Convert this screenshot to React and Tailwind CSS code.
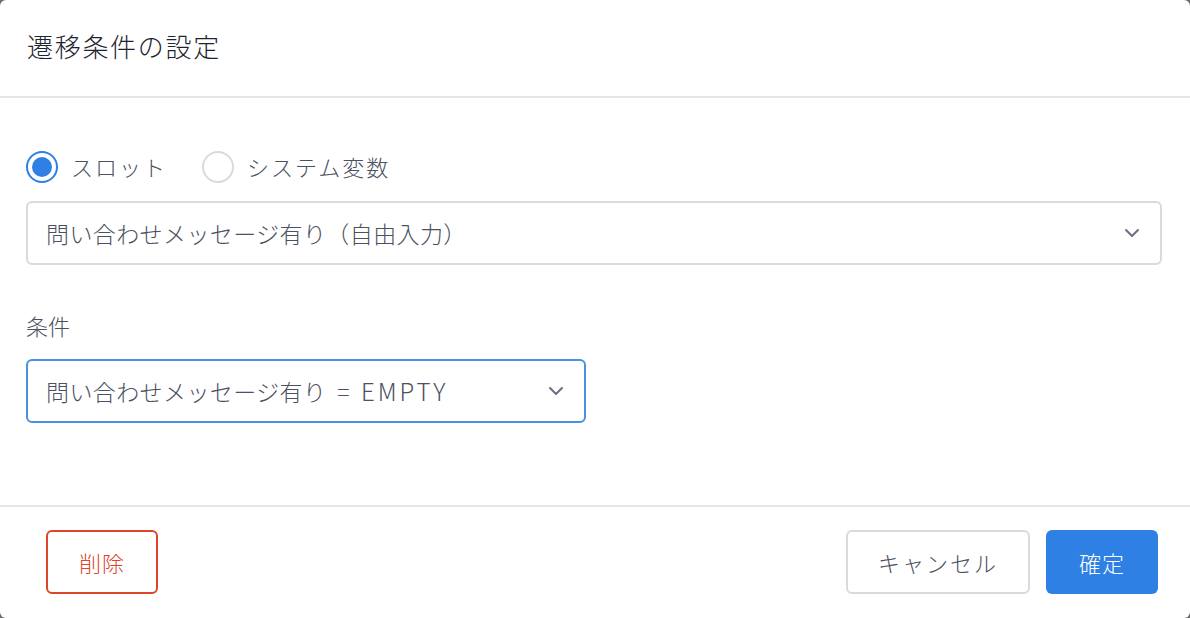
import { ChevronDown } from 'lucide-react'

const font = { fontFamily: '"Noto Sans CJK JP", "Noto Sans", sans-serif' }

function Radio({ checked, label }) {
  return (
    <label className="flex items-center gap-[13px] cursor-pointer">
      <span
        className={`flex items-center justify-center w-[32px] h-[32px] rounded-full border-2 ${
          checked ? 'border-[#2f80e4]' : 'border-[#d9d9de]'
        }`}
      >
        {checked && <span className="w-[20px] h-[20px] rounded-full bg-[#2f80e4]"></span>}
      </span>
      <span className="text-[22px] tracking-[2px] font-light text-[#4a5160]">{label}</span>
    </label>
  )
}

function Select({ children, active, className }) {
  return (
    <div
      className={`flex items-center justify-between h-[64px] pl-[18px] pr-[16px] rounded-[6px] border-2 bg-white ${
        active ? 'border-[#4a90e2]' : 'border-[#dadade]'
      } ${className}`}
    >
      <span className="text-[23px] tracking-[0.4px] font-light text-[#4a5160] whitespace-pre">{children}</span>
      <ChevronDown className="w-[24px] h-[24px] text-[#6b7080]" strokeWidth={2} />
    </div>
  )
}

export default function App() {
  return (
    <div className="h-screen bg-[#6b6b6b]" style={font}>
      <div className="h-full bg-white rounded-[6px] flex flex-col overflow-hidden">
        {/* Header */}
        <header className="h-[98px] shrink-0 flex items-center px-[27px] border-b-2 border-[#e6e6e6]">
          <h1 className="text-[26px] tracking-[1.7px] font-light text-[#1f2530] -mt-[6px]">遷移条件の設定</h1>
        </header>

        {/* Body */}
        <main className="flex-1 px-[26px] pt-[52px]">
          <div className="flex items-center gap-[35px]">
            <Radio checked label="スロット" />
            <Radio label="システム変数" />
          </div>
          <Select className="mt-[18px] w-[1136px]">問い合わせメッセージ有り（自由入力）</Select>

          <div className="mt-[45px] text-[22px] font-light text-[#4a5160] leading-[30px]">条件</div>
          <Select className="mt-[19px] w-[560px]" active>
            問い合わせメッセージ有り  =  <span className="text-[24px] tracking-[3px]">EMPTY</span>
          </Select>
        </main>

        {/* Footer */}
        <footer className="h-[113px] shrink-0 border-t-2 border-[#e6e6e6] flex items-start justify-between pt-[23px] pl-[46px] pr-[32px]">
          <button className="w-[112px] h-[64px] rounded-[6px] border-2 border-[#e0432c] text-[22px] font-light text-[#e0432c] tracking-[1px]">
            削除
          </button>
          <div className="flex gap-[16px]">
            <button className="w-[184px] h-[64px] rounded-[6px] border-2 border-[#dadade] text-[22px] font-light text-[#4a5160] tracking-[2px]">
              キャンセル
            </button>
            <button className="w-[112px] h-[64px] rounded-[6px] bg-[#2f80e4] text-[22px] font-light text-white tracking-[1px]">
              確定
            </button>
          </div>
        </footer>
      </div>
    </div>
  )
}
